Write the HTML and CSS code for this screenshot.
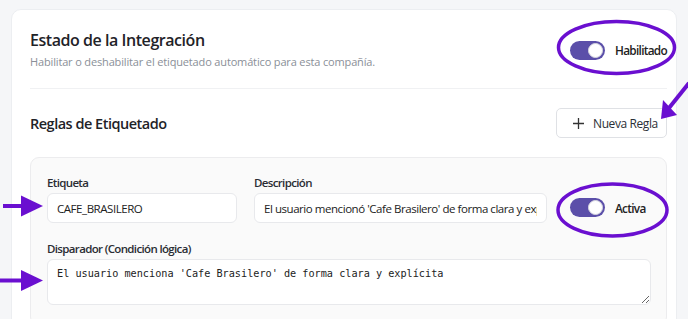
FILE: index.html
```html
<!DOCTYPE html>
<html lang="es">
<head>
    <meta charset="UTF-8">
    <meta name="viewport" content="width=device-width, initial-scale=1.0">
    <title>Integración - Etiquetado</title>
    <link rel="stylesheet" href="styles.css">
</head>
<body>

    <div class="card">
        <div class="section-row status-row">
            <div>
                <h2 class="title">Estado de la Integración</h2>
                <p class="subtitle">Habilitar o deshabilitar el etiquetado automático para esta compañía.</p>
            </div>
            <label class="switch-wrap">
                <span class="switch on"><span class="knob"></span></span>
                <span class="switch-label">Habilitado</span>
            </label>
        </div>

        <div class="divider"></div>

        <div class="section-row rules-row">
            <h3 class="section-title">Reglas de Etiquetado</h3>
            <button class="btn-outline">
                <svg width="11" height="11" viewBox="0 0 11 11"><path d="M5.5 0v11M0 5.5h11" stroke="#333" stroke-width="1.3" fill="none"/></svg>
                Nueva Regla
            </button>
        </div>

        <div class="rule-card">
            <div class="rule-top">
                <div class="field field-tag">
                    <label class="field-label">Etiqueta</label>
                    <input type="text" class="text-input" value="CAFE_BRASILERO">
                </div>
                <div class="field field-desc">
                    <label class="field-label">Descripción</label>
                    <input type="text" class="text-input" value="El usuario mencionó 'Cafe Brasilero' de forma clara y explícita">
                </div>
                <label class="switch-wrap rule-switch">
                    <span class="switch on"><span class="knob"></span></span>
                    <span class="switch-label">Activa</span>
                </label>
            </div>
            <div class="field">
                <label class="field-label">Disparador (Condición lógica)</label>
                <textarea class="text-area">El usuario menciona 'Cafe Brasilero' de forma clara y explícita</textarea>
            </div>
        </div>
    </div>

    <!-- annotations -->
    <svg class="marks" width="688" height="319" viewBox="0 0 688 319">
        <g fill="none" stroke="#6a0fd0">
            <ellipse cx="616.5" cy="47.5" rx="58" ry="26" stroke-width="3.5"/>
            <ellipse cx="612.5" cy="210" rx="54.5" ry="26" stroke-width="3.5"/>
            <line x1="689" y1="83" x2="669" y2="108" stroke-width="4"/>
            <line x1="3" y1="206" x2="23" y2="206" stroke-width="4"/>
            <line x1="0" y1="280.5" x2="23" y2="280.5" stroke-width="4"/>
        </g>
        <g fill="#6a0fd0">
            <polygon points="663,100 677,115 661,119"/>
            <polygon points="21,195.5 21,216.5 43,206"/>
            <polygon points="21,270 21,291 43,280.5"/>
        </g>
    </svg>

</body>
</html>
```

FILE: styles.css
```css
body {
    font-family: "Open Sans", "Noto Sans", sans-serif;
    background-color: #f5f6f8;
    margin: 0;
    padding: 9px 0 0 11px;
    height: 319px;
    overflow: hidden;
    color: #1f2328;
}

.card {
    background-color: #fff;
    width: 637px;
    height: 330px;
    border: 1px solid #eceef1;
    border-radius: 10px;
    padding: 19px 9px 0 18px;
}

.section-row {
    display: flex;
    justify-content: space-between;
    align-items: center;
}

.title {
    font-size: 16px;
    font-weight: 600;
    margin: 0;
    line-height: 22px;
    letter-spacing: -0.45px;
}

.subtitle {
    font-size: 11px;
    color: #8a8f98;
    margin: 3px 0 0;
    line-height: 16px;
    letter-spacing: -0.15px;
}

.switch-wrap {
    display: flex;
    align-items: center;
    gap: 10px;
}

.status-row .switch-wrap {
    margin-top: 1px;
}

.switch {
    width: 35px;
    height: 19px;
    border-radius: 10px;
    background-color: #5b4fa9;
    position: relative;
    box-sizing: border-box;
}

.knob {
    position: absolute;
    top: 2px;
    right: 2px;
    width: 15px;
    height: 15px;
    border-radius: 50%;
    background-color: #fff;
    box-sizing: border-box;
    border: 1px solid #d8d8e0;
}

.switch-label {
    font-size: 11.8px;
    font-weight: 600;
    color: #222;
    letter-spacing: -0.7px;
}

.divider {
    height: 1px;
    background-color: #f0f1f3;
    margin: 18px 0 0;
}

.rules-row {
    margin-top: 19px;
}

.section-title {
    font-size: 14.5px;
    font-weight: 600;
    margin: 0;
    letter-spacing: -0.5px;
}

.btn-outline {
    display: flex;
    align-items: center;
    gap: 9px;
    background-color: #fff;
    border: 1px solid #dfe1e5;
    border-radius: 5px;
    height: 30px;
    width: 111px;
    padding: 0 0 0 16px;
    font-family: inherit;
    font-size: 12px;
    font-weight: 500;
    color: #2b2f36;
    letter-spacing: -0.4px;
    cursor: pointer;
}

.rule-card {
    margin-top: 19px;
    background-color: #fafafa;
    border: 1px solid #ececee;
    border-radius: 9px;
    padding: 17px 16px 20px 16px;
}

.rule-top {
    display: flex;
    align-items: flex-end;
    gap: 17px;
}

.field {
    display: flex;
    flex-direction: column;
}

.field-tag {
    width: 190px;
}

.field-desc {
    width: 293px;
}

.field-label {
    font-size: 11.5px;
    font-weight: 600;
    color: #2a2d33;
    line-height: 16px;
    margin-bottom: 2px;
    letter-spacing: -0.65px;
}

.text-input {
    height: 30px;
    box-sizing: border-box;
    border: 1px solid #e8e9ec;
    border-radius: 6px;
    background-color: #fff;
    padding: 0 9px;
    font-family: inherit;
    font-size: 11.5px;
    color: #222;
    letter-spacing: -0.45px;
    outline: none;
}

.rule-switch {
    margin: 0 0 6px 6px;
}

.rule-top + .field {
    margin-top: 18px;
}

.text-area {
    height: 46px;
    box-sizing: border-box;
    border: 1px solid #e8e9ec;
    border-radius: 6px;
    background-color: #fff;
    padding: 8px 9px 6px;
    font-family: "DejaVu Sans Mono", monospace;
    font-size: 10.2px;
    color: #222;
    width: 604px;
    resize: vertical;
    outline: none;
}

.marks {
    position: absolute;
    left: 0;
    top: 0;
    pointer-events: none;
}
```
